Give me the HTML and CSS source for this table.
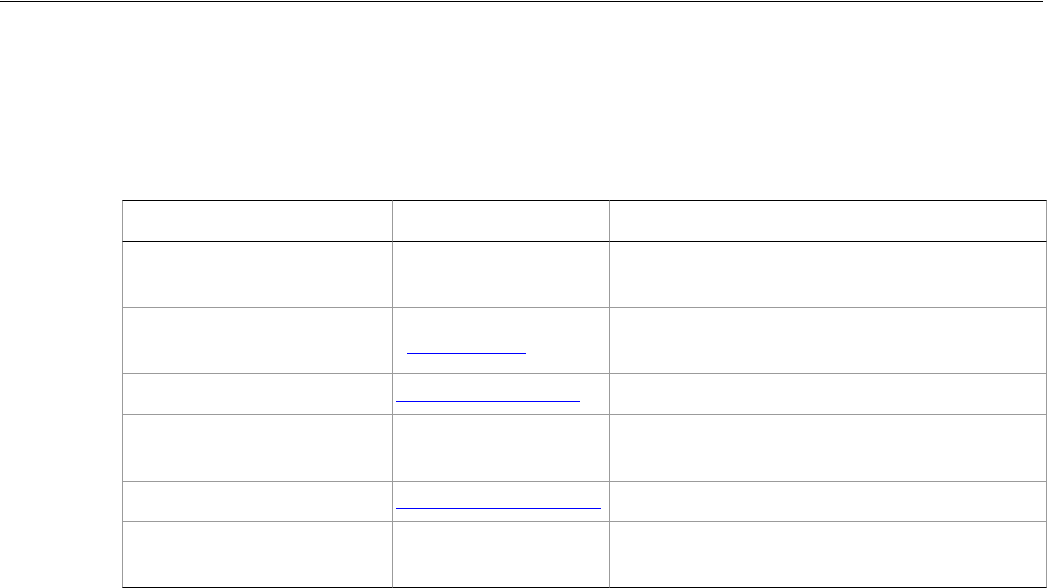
FILE: index.html
```html
<!DOCTYPE html>
<html lang="en">
<head>
<meta charset="utf-8">
<title>Table</title>
<link rel="stylesheet" href="styles.css">
</head>
<body>
<div class="rule"></div>
<table class="grid">
  <thead>
    <tr class="r-head">
      <th class="c1"></th>
      <th class="c2"></th>
      <th class="c3"></th>
    </tr>
  </thead>
  <tbody>
    <tr class="r-tall"><td></td><td></td><td></td></tr>
    <tr class="r-tall"><td></td><td><a class="link link-a" href="#"></a></td><td></td></tr>
    <tr class="r-short"><td></td><td><a class="link link-b" href="#"></a></td><td></td></tr>
    <tr class="r-tall2"><td></td><td></td><td></td></tr>
    <tr class="r-short2"><td></td><td><a class="link link-c" href="#"></a></td><td></td></tr>
    <tr class="r-tall r-last"><td></td><td></td><td></td></tr>
  </tbody>
</table>
</body>
</html>
```

FILE: styles.css
```css
html, body {
  margin: 0;
  padding: 0;
  background: #fff;
  font-family: "Liberation Sans", Arial, sans-serif;
  font-size: 14px;
  overflow: hidden;
}

.rule {
  margin-top: 1px;
  width: 1043px;
  height: 0;
  border-top: 1px solid #000;
}

.grid {
  margin: 198px 0 0 122px;
  width: 925px;
  table-layout: fixed;
  border-collapse: separate;
  border-spacing: 0;
}

.grid th,
.grid td {
  box-sizing: border-box;
  padding: 0 0 0 3px;
  vertical-align: top;
  border-right: 1px solid #9b9b9b;
  border-bottom: 1px solid #9b9b9b;
}

.grid th:first-child,
.grid td:first-child {
  border-left: 1px solid #9b9b9b;
}

.grid th {
  border-top: 1px solid #000;
  border-bottom: 1px solid #000;
}

.c1 { width: 271px; }
.c2 { width: 217px; }
.c3 { width: 437px; }

.r-head { height: 42px; }
.r-tall { height: 66px; }
.r-short { height: 41px; }
.r-tall2 { height: 67px; }
.r-short2 { height: 40px; }

.grid .r-last td {
  border-bottom: 1px solid #000;
}

.link {
  display: block;
  height: 0;
  border-bottom: 1px solid #0000ff;
}

.link-a {
  width: 119px;
  margin: 45px 0 0 11px;
}

.link-b {
  width: 184px;
  margin-top: 27px;
}

.link-c {
  width: 205px;
  margin-top: 26px;
}
```
